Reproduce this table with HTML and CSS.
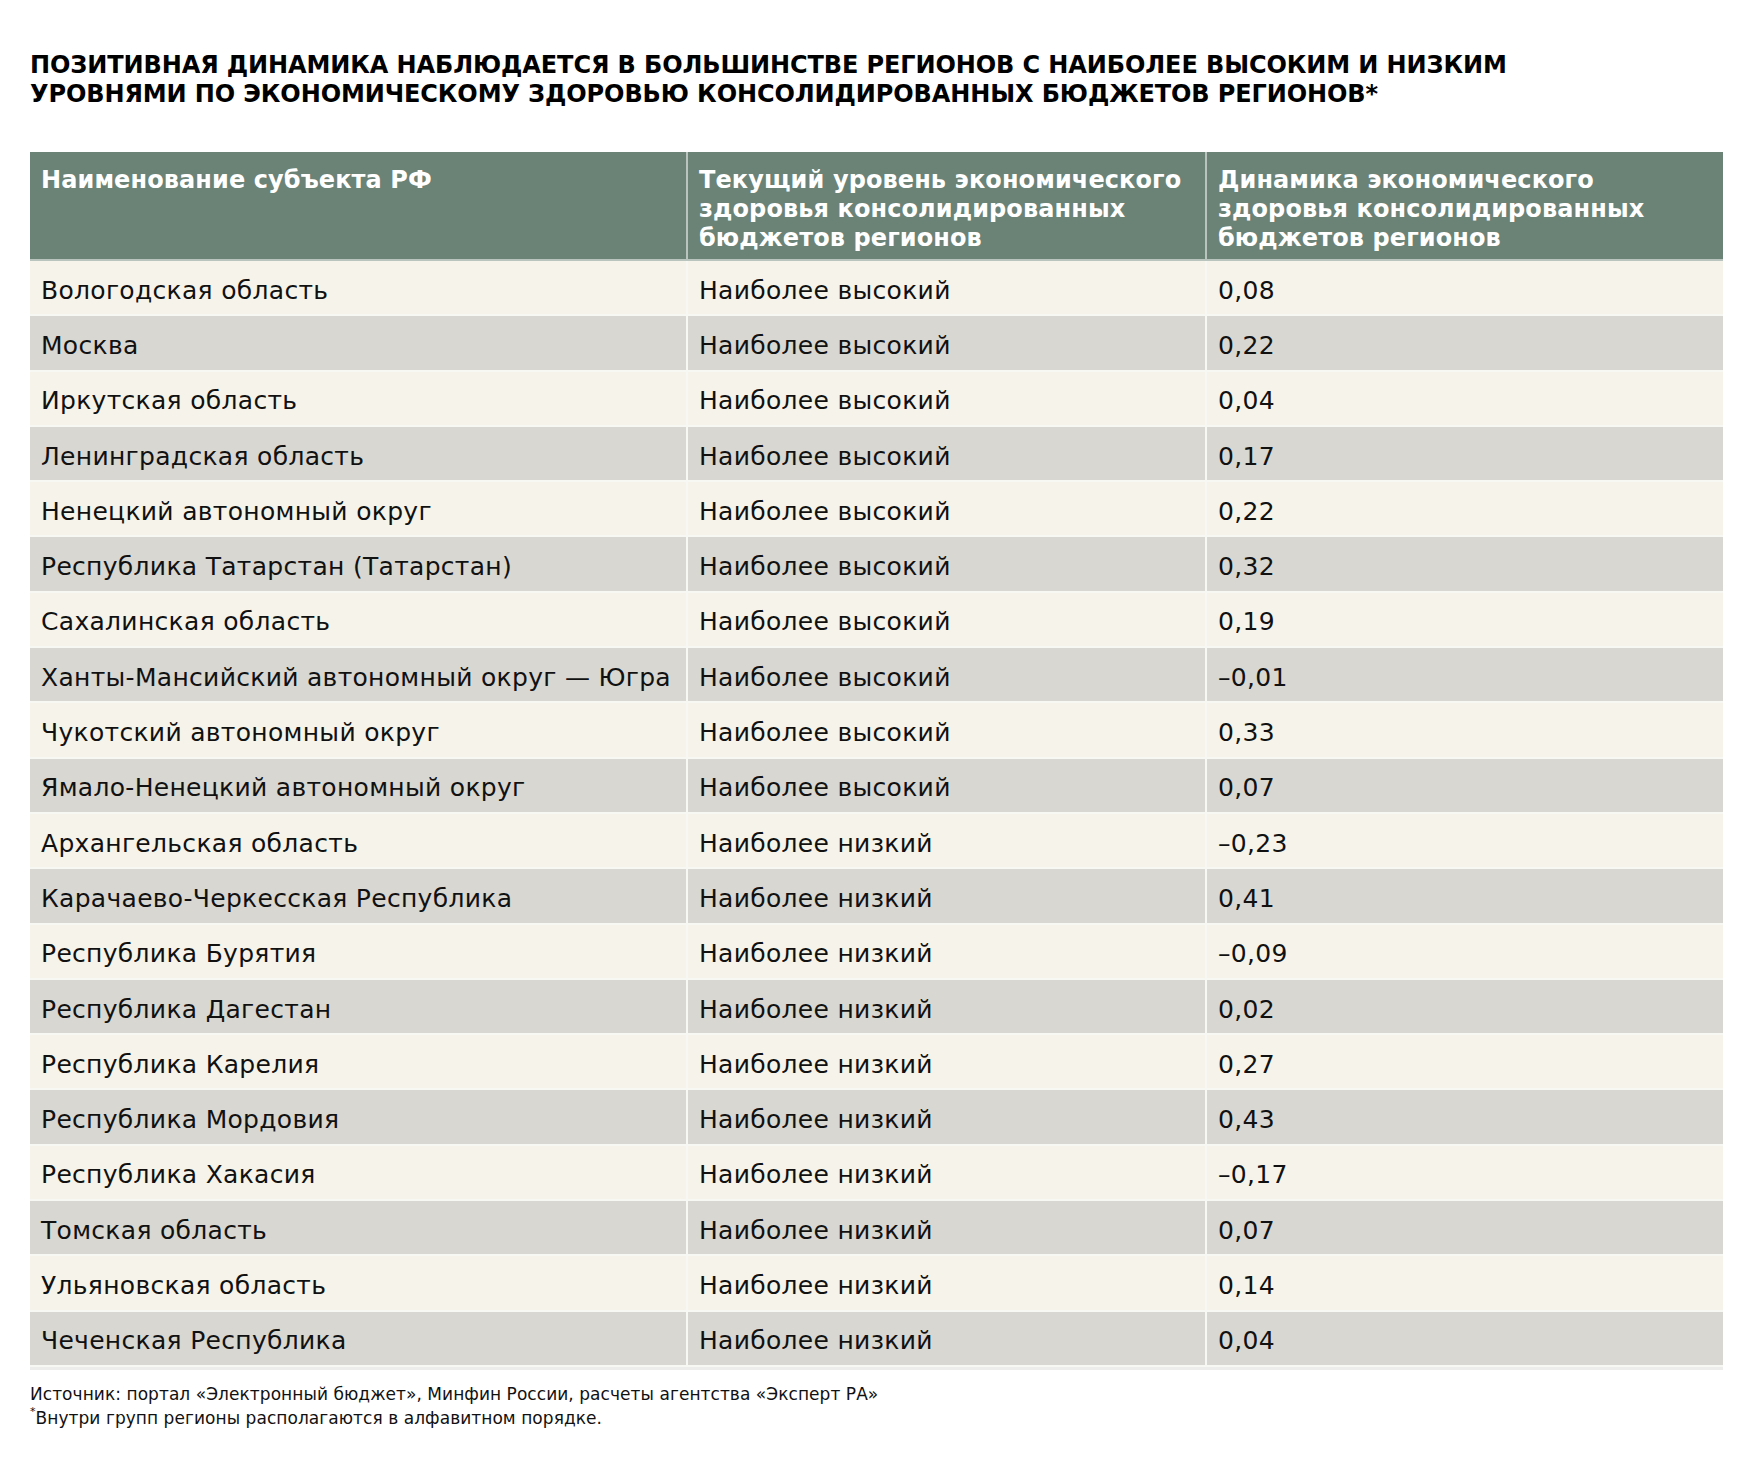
FILE: index.html
```html
<!DOCTYPE html>
<html lang="ru">
<head>
<meta charset="utf-8">
<link rel="stylesheet" href="styles.css">
</head>
<body>
<div class="page">
  <h1 class="title">ПОЗИТИВНАЯ ДИНАМИКА НАБЛЮДАЕТСЯ В БОЛЬШИНСТВЕ РЕГИОНОВ С НАИБОЛЕЕ ВЫСОКИМ И НИЗКИМ<br>УРОВНЯМИ ПО ЭКОНОМИЧЕСКОМУ ЗДОРОВЬЮ КОНСОЛИДИРОВАННЫХ БЮДЖЕТОВ РЕГИОНОВ*</h1>
  <div class="grid">
    <div class="cell head">Наименование субъекта РФ</div>
    <div class="cell head">Текущий уровень экономического<br>здоровья консолидированных<br>бюджетов регионов</div>
    <div class="cell head last">Динамика экономического<br>здоровья консолидированных<br>бюджетов регионов</div>

    <div class="cell odd">Вологодская область</div><div class="cell odd">Наиболее высокий</div><div class="cell odd last">0,08</div>
    <div class="cell even">Москва</div><div class="cell even">Наиболее высокий</div><div class="cell even last">0,22</div>
    <div class="cell odd">Иркутская область</div><div class="cell odd">Наиболее высокий</div><div class="cell odd last">0,04</div>
    <div class="cell even">Ленинградская область</div><div class="cell even">Наиболее высокий</div><div class="cell even last">0,17</div>
    <div class="cell odd">Ненецкий автономный округ</div><div class="cell odd">Наиболее высокий</div><div class="cell odd last">0,22</div>
    <div class="cell even">Республика Татарстан (Татарстан)</div><div class="cell even">Наиболее высокий</div><div class="cell even last">0,32</div>
    <div class="cell odd">Сахалинская область</div><div class="cell odd">Наиболее высокий</div><div class="cell odd last">0,19</div>
    <div class="cell even">Ханты-Мансийский автономный округ — Югра</div><div class="cell even">Наиболее высокий</div><div class="cell even last">–0,01</div>
    <div class="cell odd">Чукотский автономный округ</div><div class="cell odd">Наиболее высокий</div><div class="cell odd last">0,33</div>
    <div class="cell even">Ямало-Ненецкий автономный округ</div><div class="cell even">Наиболее высокий</div><div class="cell even last">0,07</div>
    <div class="cell odd">Архангельская область</div><div class="cell odd">Наиболее низкий</div><div class="cell odd last">–0,23</div>
    <div class="cell even">Карачаево-Черкесская Республика</div><div class="cell even">Наиболее низкий</div><div class="cell even last">0,41</div>
    <div class="cell odd">Республика Бурятия</div><div class="cell odd">Наиболее низкий</div><div class="cell odd last">–0,09</div>
    <div class="cell even">Республика Дагестан</div><div class="cell even">Наиболее низкий</div><div class="cell even last">0,02</div>
    <div class="cell odd">Республика Карелия</div><div class="cell odd">Наиболее низкий</div><div class="cell odd last">0,27</div>
    <div class="cell even">Республика Мордовия</div><div class="cell even">Наиболее низкий</div><div class="cell even last">0,43</div>
    <div class="cell odd">Республика Хакасия</div><div class="cell odd">Наиболее низкий</div><div class="cell odd last">–0,17</div>
    <div class="cell even">Томская область</div><div class="cell even">Наиболее низкий</div><div class="cell even last">0,07</div>
    <div class="cell odd">Ульяновская область</div><div class="cell odd">Наиболее низкий</div><div class="cell odd last">0,14</div>
    <div class="cell even">Чеченская Республика</div><div class="cell even">Наиболее низкий</div><div class="cell even last">0,04</div>
  </div>
  <div class="notes">
    <p>Источник: портал «Электронный бюджет», Минфин России, расчеты агентства «Эксперт РА»</p>
    <p><sup class="star">*</sup>Внутри групп регионы располагаются в алфавитном порядке.</p>
  </div>
</div>
</body>
</html>
```

FILE: styles.css
```css
html, body {
  margin: 0;
  padding: 0;
  background: #ffffff;
}
body {
  font-family: "DejaVu Sans", "Noto Sans", sans-serif;
  color: #111111;
}
.page {
  padding: 51px 31px 0 30px;
}
.title {
  margin: 0;
  font-family: "DejaVu Sans", sans-serif;
  font-weight: 700;
  font-size: 24px;
  line-height: 29px;
  color: #000;
  letter-spacing: -0.1px;
}
.grid {
  margin-top: 43px;
  display: grid;
  grid-template-columns: 658px 519px 516px;
  grid-auto-rows: 55.3px;
  grid-template-rows: 109px;
  border-bottom: 3px solid #ededeb;
}
.cell {
  display: flex;
  align-items: center;
  padding: 5px 10px 0 11px;
  border-right: 2px solid #f7f7f3;
  border-bottom: 2px solid #f7f7f3;
  font-size: 25px;
  letter-spacing: 0.3px;
  white-space: nowrap;
}
.cell.last {
  border-right: none;
}
.cell.head {
  align-items: flex-start;
  padding-top: 14px;
  background: #6b8277;
  color: #ffffff;
  font-weight: 700;
  font-size: 24px;
  line-height: 29px;
  letter-spacing: 0.1px;
  white-space: nowrap;
  border-color: #b9c4be;
}
.cell.odd {
  background: #f6f4ea;
}
.cell.even {
  background: #d8d7d2;
}
.notes {
  margin-top: 12px;
  font-size: 17px;
  line-height: 24px;
  color: #111;
  letter-spacing: 0.05px;
}
.notes p {
  margin: 0;
}
.star {
  font-size: 11px;
  vertical-align: top;
  line-height: 12px;
}
```
